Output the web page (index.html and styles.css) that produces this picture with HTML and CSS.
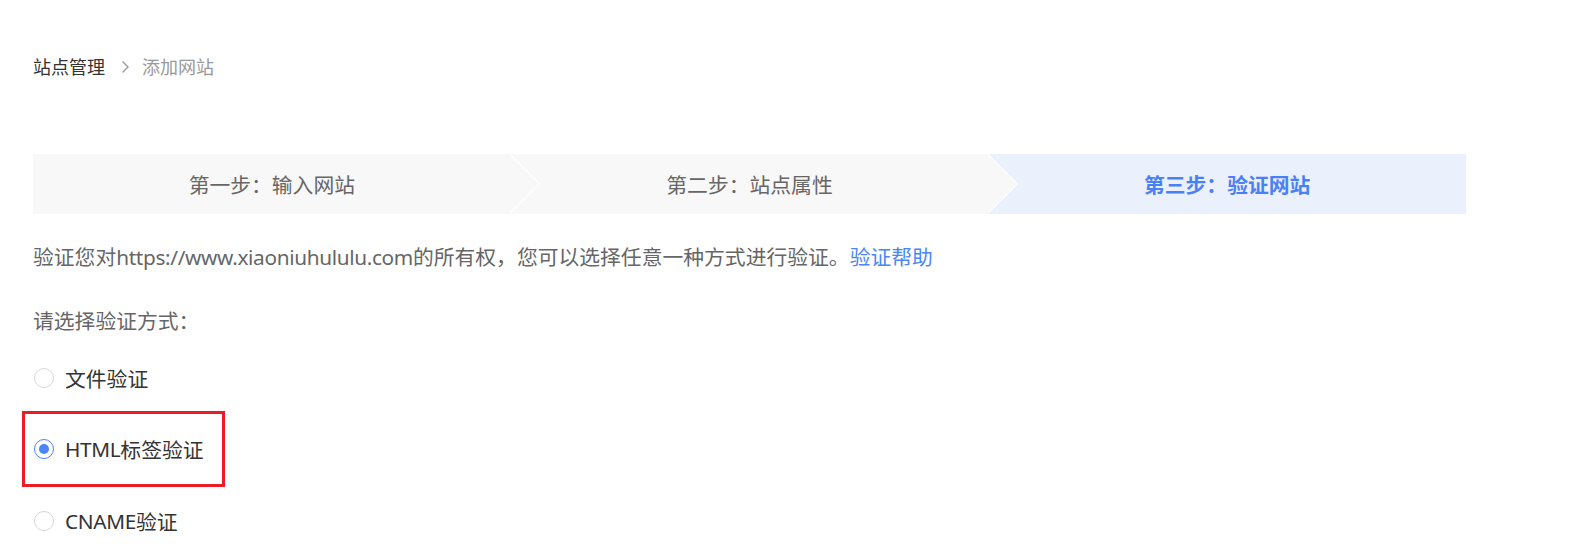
FILE: index.html
```html
<!DOCTYPE html>
<html lang="zh-CN">
<head>
  <meta charset="UTF-8">
  <title>添加网站</title>
  <link rel="stylesheet" href="styles.css">
</head>
<body>
  <div class="page">
    <div class="crumbs">
      <span class="crumb">站点管理</span>
      <svg class="sep" width="10" height="14" viewBox="0 0 10 14"><path d="M2.5 1.5 L8 7 L2.5 12.5" fill="none" stroke="#999" stroke-width="1.4"/></svg>
      <span class="crumb current">添加网站</span>
    </div>

    <div class="steps">
      <div class="step s1">第一步：输入网站</div>
      <div class="step s2">第二步：站点属性</div>
      <div class="step s3 active">第三步：验证网站</div>
    </div>

    <p class="desc">验证您对<span class="latin">https://www.xiaoniuhululu.com</span>的所有权，您可以选择任意一种方式进行验证。<a href="#">验证帮助</a></p>
    <p class="ask">请选择验证方式：</p>

    <div class="options">
      <label class="opt"><span class="radio"></span>文件验证</label>
      <div class="mark">
        <label class="opt"><span class="radio on"></span><span class="latin">HTML</span>标签验证</label>
      </div>
      <label class="opt"><span class="radio"></span><span class="latin">CNAME</span>验证</label>
    </div>
  </div>
</body>
</html>
```
FILE: styles.css
```css
body { margin: 0; background: #fff; font-family: "Noto Sans", "Noto Sans CJK SC", sans-serif; color: #666; }
.page { padding: 55px 0 0 33px; width: 1433px; }
.latin { letter-spacing: -0.35px; }

.crumbs { display: flex; align-items: center; height: 24px; font-size: 18px; line-height: 24px; }
.crumb { color: #333; }
.crumb.current { color: #999; }
.sep { margin: 0 12px 0 15px; }

.steps { display: flex; height: 60px; margin-top: 75px; }
.step { position: relative; flex: 1; display: flex; align-items: center; justify-content: center; background: #f8f8f8; font-size: 20.8px; color: #666; }
.step.s1 { z-index: 3; }
.step.s2 { z-index: 2; }
.step.s3 { z-index: 1; }
.step.s1::after, .step.s2::after { content: ""; position: absolute; top: 50%; right: 0; width: 42.4px; height: 42.4px; box-sizing: border-box; background: #f8f8f8; border-top: 1.5px solid #fff; border-right: 1.5px solid #fff; transform: translate(50%, -50%) rotate(45deg); }
.step.active { background: #eaf1fd; color: #4a80f6; font-weight: bold; }

.desc { margin: 29px 0 0; font-size: 20.8px; line-height: 28px; color: #666; }
.desc a { color: #4a86f6; text-decoration: none; }
.ask { margin: 36px 0 0; font-size: 20.8px; line-height: 28px; color: #666; }

.options { margin-top: 29px; }
.opt { display: flex; align-items: center; height: 28px; font-size: 20.8px; color: #333; }
.options > .opt:last-child { margin-top: 20px; }
.radio { width: 20px; height: 20px; box-sizing: border-box; border: 1px solid #d9d9d9; border-radius: 50%; margin: 0 11px 0 1px; display: flex; align-items: center; justify-content: center; }
.radio.on { border-color: #4a86f6; }
.radio.on::before { content: ""; width: 10px; height: 10px; border-radius: 50%; background: #4a86f6; }
.mark { display: inline-block; margin: 19px 0 0 -11px; padding: 21px 18px 21px 8px; border: 3px solid #ec1c24; }
```
